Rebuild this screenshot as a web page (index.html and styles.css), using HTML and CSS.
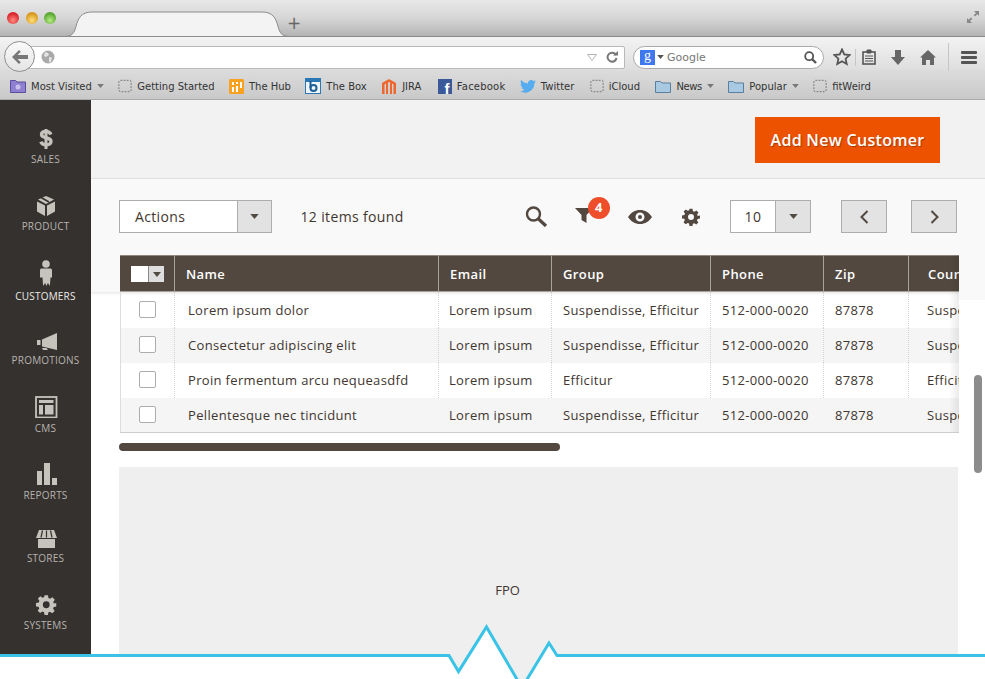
FILE: index.html
```html
<!DOCTYPE html>
<html lang="en">
<head>
    <meta charset="UTF-8">
    <title>Customers</title>
    <link rel="stylesheet" href="styles.css">
</head>
<body>
    <svg class="defs" width="0" height="0">
        <symbol id="gear" viewBox="0 0 24 24">
            <path d="M10 1h4l.6 3.200 1.900.8 2.700-1.800 2.800 2.800-1.800 2.700.8 1.900L24 10v4l-3.200.6-.8 1.900 1.800 2.700-2.800 2.800-2.700-1.800-1.900.8L14 24h-4l-.6-3.200-1.900-.8-2.700 1.800-2.800-2.800 1.800-2.700-.8-1.900L0 14v-4l3.200-.6.8-1.900-1.800-2.700 2.800-2.800 2.700 1.800 1.900-.8zM12 8a4 4 0 1 0 0 8 4 4 0 0 0 0-8z" fill-rule="evenodd"/>
        </symbol>
        <symbol id="dashed" viewBox="0 0 16 16">
            <rect x="1" y="1.500" width="14" height="13" rx="2" fill="none" stroke="#666" stroke-dasharray="2 1.500"/>
        </symbol>
        <symbol id="folder" viewBox="0 0 16 16">
            <path d="M.5 3.500h5l1.500 1.500h8.500v9.500H.5z" fill="#a9c8e2" stroke="#5a7f9e"/>
        </symbol>
        <symbol id="caret" viewBox="0 0 10 6">
            <path d="M0 0h10L5 6z"/>
        </symbol>
    </svg>

    <!-- browser -->
    <div class="tabstrip">
        <div class="lights">
            <span class="light light-red"></span>
            <span class="light light-yellow"></span>
            <span class="light light-green"></span>
        </div>
        <svg class="tab" width="226" height="28" viewBox="0 0 226 28">
            <path d="M0 27.500c8 0 10-3 12-10 2-8 5-14.500 16-14.500h170c11 0 14 6.500 16 14.500 2 7 4 10 12 10z" fill="#f3f3f3" stroke="#8c8c8c"/>
        </svg>
        <span class="tab-plus">+</span>
        <svg class="expand" width="14" height="14" viewBox="0 0 14 14">
            <path d="M8 1h5v5l-1.700-1.700-2.300 2.300-1.300-1.300 2.300-2.300zM6 13H1V8l1.700 1.700L5 7.400l1.300 1.300L4 11z" fill="#888"/>
        </svg>
    </div>
    <div class="navbar">
        <div class="back">
            <svg width="16" height="14" viewBox="0 0 16 14">
                <path d="M7 0l1.800 1.800L5.500 5H16v4H5.500l3.300 3.200L7 14 0 7z" fill="#777"/>
            </svg>
        </div>
        <div class="urlbar">
            <svg width="14" height="14" viewBox="0 0 14 14">
                <circle cx="7" cy="7" r="6.500" fill="#a9a9a9"/>
                <path d="M4 2l3 1 1 2-3 2-2-1zM8 7l3 .5-1 4-2 1z" fill="#e4e4e4"/>
            </svg>
            <svg class="url-drop" width="10" height="7" viewBox="0 0 10 7">
                <path d="M.5.500h9L5 6.500z" fill="none" stroke="#b5b5b5"/>
            </svg>
            <svg class="url-reload" width="12" height="12" viewBox="0 0 12 12">
                <path d="M10 4a4.500 4.500 0 1 0 .5 3" fill="none" stroke="#777" stroke-width="2"/>
                <path d="M7 4.500h5V0z" fill="#777"/>
            </svg>
        </div>
        <div class="searchbar">
            <span class="g-logo">g</span>
            <svg class="small-caret" width="7" height="4"><use href="#caret"/></svg>
            <span class="search-hint">Google</span>
            <svg width="13" height="13" viewBox="0 0 13 13">
                <circle cx="5.200" cy="5.200" r="4" fill="none" stroke="#555" stroke-width="1.800"/>
                <path d="M8 8l4 4" stroke="#555" stroke-width="2.400"/>
            </svg>
        </div>
        <svg class="tool tool-star" width="18" height="18" viewBox="0 0 18 18">
            <path d="M9 1.500l2.300 5 5.200.6-3.900 3.600 1.100 5.300L9 13.300 4.300 16l1.100-5.300L1.500 7.100l5.200-.6z" fill="none" stroke="#555" stroke-width="1.800"/>
        </svg>
        <span class="tool-sep"></span>
        <svg class="tool tool-clip" width="14" height="16" viewBox="0 0 14 16">
            <rect x="1" y="3" width="12" height="12" fill="none" stroke="#555" stroke-width="1.600"/>
            <path d="M5 1h4v3H5zM3 7h8M3 9.500h8M3 12h8" fill="#555" stroke="#555"/>
        </svg>
        <svg class="tool tool-down" width="14" height="15" viewBox="0 0 14 15">
            <path d="M4 0h6v7h4l-7 8-7-8h4z" fill="#666"/>
        </svg>
        <svg class="tool tool-home" width="16" height="15" viewBox="0 0 16 15">
            <path d="M8 0l8 7.500h-2V15h-4v-5H6v5H2V7.500H0z" fill="#666"/>
        </svg>
        <span class="tool-sep tool-sep-long"></span>
        <div class="menu-btn"><span></span><span></span><span></span></div>
    </div>
    <div class="bookmarks">
        <div class="bm">
            <svg width="16" height="14" viewBox="0 0 16 14">
                <path d="M.5 1.500h5l1.500 1.500h8.500v10.500H.5z" fill="#8f7fd0" stroke="#5a4d9c"/>
                <circle cx="8" cy="8" r="2.500" fill="#c9c0ee"/>
            </svg>
            Most Visited
            <svg class="bm-caret" width="7" height="4"><use href="#caret"/></svg>
        </div>
        <div class="bm"><svg width="14" height="14"><use href="#dashed"/></svg>Getting Started</div>
        <div class="bm">
            <svg width="15" height="15" viewBox="0 0 15 15">
                <rect width="15" height="15" rx="1.500" fill="#f7a11f"/>
                <path d="M3 3h2v3H3zM7 3h2v2H7zM11 3h2v6h-2zM3 8h2v5H3zM7 7h2v6H7z" fill="#fff"/>
            </svg>
            The Hub
        </div>
        <div class="bm">
            <svg width="16" height="16" viewBox="0 0 16 16">
                <rect x=".5" y=".5" width="15" height="15" fill="#eef5fb" stroke="#2b78b5"/>
                <rect x="1" y="1" width="14" height="3" fill="#2b78b5"/>
                <circle cx="8.500" cy="10" r="3" fill="none" stroke="#1d5f96" stroke-width="2"/>
                <path d="M5.500 3v7" stroke="#1d5f96" stroke-width="2"/>
            </svg>
            The Box
        </div>
        <div class="bm">
            <svg width="16" height="17" viewBox="0 0 16 17">
                <path d="M1 16V5l7-4 7 4v11h-2.500V6.500L11 5.500V16H9V4.500L8 4l-1 .5V16H5V5.500l-1.500 1V16z" fill="#ee672f"/>
            </svg>
            JIRA
        </div>
        <div class="bm bm-facebook">
            <svg width="14" height="15" viewBox="0 0 14 15">
                <rect width="14" height="15" fill="#3b5998"/>
                <text x="6.500" y="15" class="fb-letter">f</text>
            </svg>
            Facebook
        </div>
        <div class="bm">
            <svg width="16" height="13" viewBox="0 0 16 13">
                <path d="M16 1.500c-.6.300-1.200.400-1.900.5.700-.4 1.200-1 1.400-1.800-.6.400-1.300.6-2 .8A3.300 3.300 0 0 0 7.900 3.500C5.200 3.400 2.800 2.100 1.100.1.200 1.600.700 3.500 2.100 4.500c-.5 0-1-.2-1.500-.4 0 1.600 1.100 3 2.600 3.300-.5.100-1 .2-1.500.1.400 1.300 1.600 2.200 3.100 2.300A6.600 6.600 0 0 1 0 11.100 9.300 9.300 0 0 0 14.400 3.300c.6-.5 1.200-1.100 1.600-1.800z" fill="#55acee"/>
            </svg>
            Twitter
        </div>
        <div class="bm bm-nudge"><svg width="14" height="14"><use href="#dashed"/></svg>iCloud</div>
        <div class="bm bm-nudge bm-news"><svg width="16" height="16"><use href="#folder"/></svg>News<svg class="bm-caret" width="7" height="4"><use href="#caret"/></svg></div>
        <div class="bm"><svg width="16" height="16"><use href="#folder"/></svg>Popular<svg class="bm-caret" width="7" height="4"><use href="#caret"/></svg></div>
        <div class="bm"><svg width="14" height="14"><use href="#dashed"/></svg>fitWeird</div>
    </div>

    <!-- admin page -->
    <div class="app">
        <nav class="sidebar">
            <a class="nav-item">
                <svg width="40" height="22" viewBox="0 0 40 22">
                    <path d="M25 7.500c-1-2-3-3-5-3s-4.500.8-4.500 3c0 4.500 9.500 2 9.500 7 0 2.200-2.500 3.300-5 3.300s-4.300-1-5.300-3" fill="none" stroke-width="3.400"/>
                    <rect x="18.500" y="2" width="3" height="20"/>
                </svg>
                Sales
            </a>
            <a class="nav-item">
                <svg width="40" height="26" viewBox="0 0 40 26">
                    <path d="M11 11.500l8 4V26l-8-4.500zM29 11.500l-8 4V26l8-4.500zM12 9.500L20 6l8 3.500-8 4.500z"/>
                    <path d="M15 7.500l8 4.500" stroke="#35312e" stroke-width="1.500"/>
                </svg>
                Product
            </a>
            <a class="nav-item nav-item-active">
                <svg width="40" height="29" viewBox="0 0 40 29">
                    <circle cx="20" cy="7" r="3.800"/>
                    <path d="M15.500 11.500h9c1 0 1.500.8 1.500 2v7h-1.500l-.6 8.500-2-3-1.400 3-1.400-3-2 3-.6-8.500H14v-7c0-1.200.5-2 1.500-2z"/>
                </svg>
                Customers
            </a>
            <a class="nav-item">
                <svg width="40" height="23" viewBox="0 0 40 23">
                    <path d="M16 12.500L31 6v17l-15-3.500zM11 13h3.500v5H11zM16 21h4.500l1.500 2h-5z"/>
                </svg>
                Promotions
            </a>
            <a class="nav-item">
                <svg width="40" height="27" viewBox="0 0 40 27">
                    <rect x="10" y="6" width="20.500" height="20.500" fill="none" stroke-width="1.800"/>
                    <path d="M13 9h14.500v3H13zM13 14h4v9.500h-4zM19 14h8.500v9.500H19z"/>
                </svg>
                CMS
            </a>
            <a class="nav-item">
                <svg width="40" height="26" viewBox="0 0 40 26">
                    <path d="M11 12h5v14h-5zM18 4h6v22h-6zM26 19h5v7h-5z"/>
                </svg>
                Reports
            </a>
            <a class="nav-item">
                <svg width="40" height="22" viewBox="0 0 40 22">
                    <path d="M13 4h15l3 8H10zM12 13h17v9H12z"/>
                    <path d="M16.500 4.500l-1.500 7M20.500 4.500v7M24.500 4.500l1.500 7" stroke="#35312e" stroke-width="1.200"/>
                </svg>
                Stores
            </a>
            <a class="nav-item">
                <svg width="40" height="26" viewBox="0 0 40 26">
                    <use href="#gear" x="10" y="5.500" width="20.500" height="20.500"/>
                </svg>
                Systems
            </a>
        </nav>

        <main class="content">
            <div class="page-head">
                <button class="add-btn">Add New Customer</button>
            </div>
            <div class="toolbar">
                <div class="select select-actions">
                    <span class="select-value">Actions</span>
                    <span class="select-arrow"><svg width="9" height="5"><use href="#caret"/></svg></span>
                </div>
                <span class="found">12 items found</span>
                <svg class="tb-icon tb-search" width="23" height="21" viewBox="0 0 23 21">
                    <circle cx="8.500" cy="8" r="6.500" fill="none" stroke-width="2.400" class="tb-stroke"/>
                    <path d="M13 12.500l8 7.500" stroke-width="3.200" class="tb-stroke"/>
                </svg>
                <div class="tb-filter">
                    <svg width="18" height="15" viewBox="0 0 18 15">
                        <path d="M0 0h18l-6.500 7v8l-5-3V7z" fill="#524840"/>
                    </svg>
                    <span class="badge">4</span>
                </div>
                <svg class="tb-icon tb-eye" width="24" height="14" viewBox="0 0 24 14">
                    <path d="M0 7c3-4.500 7-7 12-7s9 2.500 12 7c-3 4.500-7 7-12 7S3 11.500 0 7zm12-4.500a4.500 4.500 0 1 0 0 9 4.500 4.500 0 0 0 0-9zM12 5a2 2 0 1 1 0 4 2 2 0 0 1 0-4z" fill-rule="evenodd" fill="#524840"/>
                </svg>
                <svg class="tb-icon tb-gear" width="18" height="18"><use href="#gear" fill="#524840"/></svg>
                <div class="select select-pager">
                    <span class="select-value">10</span>
                    <span class="select-arrow"><svg width="9" height="5"><use href="#caret"/></svg></span>
                </div>
                <button class="page-btn page-prev">
                    <svg width="9" height="14" viewBox="0 0 9 14"><path d="M7.500 1l-6 6 6 6" class="tb-stroke" fill="none" stroke-width="2"/></svg>
                </button>
                <button class="page-btn page-next">
                    <svg width="9" height="14" viewBox="0 0 9 14"><path d="M1.500 1l6 6-6 6" class="tb-stroke" fill="none" stroke-width="2"/></svg>
                </button>
            </div>
            <span class="band-end"></span>

            <div class="grid-wrap">
                <table class="grid">
                    <thead>
                        <tr>
                            <th class="col-check">
                                <span class="check-all"><i></i><b><svg width="8" height="5"><use href="#caret"/></svg></b></span>
                            </th>
                            <th class="col-name">Name</th>
                            <th class="col-email">Email</th>
                            <th class="col-group">Group</th>
                            <th class="col-phone">Phone</th>
                            <th class="col-zip">Zip</th>
                            <th class="col-country">Country</th>
                        </tr>
                    </thead>
                    <tbody>
                        <tr>
                            <td><span class="check"></span></td>
                            <td>Lorem ipsum dolor</td>
                            <td>Lorem ipsum</td>
                            <td>Suspendisse, Efficitur</td>
                            <td>512-000-0020</td>
                            <td>87878</td>
                            <td>Suspendisse</td>
                        </tr>
                        <tr>
                            <td><span class="check"></span></td>
                            <td>Consectetur adipiscing elit</td>
                            <td>Lorem ipsum</td>
                            <td>Suspendisse, Efficitur</td>
                            <td>512-000-0020</td>
                            <td>87878</td>
                            <td>Suspendisse</td>
                        </tr>
                        <tr>
                            <td><span class="check"></span></td>
                            <td>Proin fermentum arcu nequeasdfd</td>
                            <td>Lorem ipsum</td>
                            <td>Efficitur</td>
                            <td>512-000-0020</td>
                            <td>87878</td>
                            <td>Efficitur</td>
                        </tr>
                        <tr>
                            <td><span class="check"></span></td>
                            <td>Pellentesque nec tincidunt</td>
                            <td>Lorem ipsum</td>
                            <td>Suspendisse, Efficitur</td>
                            <td>512-000-0020</td>
                            <td>87878</td>
                            <td>Suspendisse</td>
                        </tr>
                    </tbody>
                </table>
                <span class="grid-fade"></span>
            </div>
            <div class="h-scroll"></div>
            <div class="fpo">FPO</div>
            <span class="v-scroll"></span>
        </main>
    </div>

    <!-- torn edge over the bottom of the page -->
    <svg class="torn" width="985" height="60" viewBox="0 0 985 60">
        <path d="M0 36.500H449L458.500 52.500 486.500 8 518 62H526L549 24 557 36.500H985V60H0z" fill="#fff"/>
        <path d="M0 36.500H449L458.500 52.500 486.500 8 518 62M526 62L549 24 557 36.500H985" fill="none" stroke="#39c3e6" stroke-width="3"/>
    </svg>
</body>
</html>
```

FILE: styles.css
```css
html, body {
    margin: 0;
    padding: 0;
    height: 679px;
    overflow: hidden;
    background-color: #fff;
}

body {
    position: relative;
    font-family: "Open Sans", Arial, sans-serif;
    color: #41362f;
}

.defs {
    position: absolute;
}

/* browser */
.tabstrip {
    display: flex;
    height: 37px;
    box-sizing: border-box;
    align-items: flex-end;
    padding-left: 64px;
    position: relative;
    background: linear-gradient(#e8e8e8, #d6d6d6 50%, #b4b4b4);
    border-bottom: 1px solid #8a8a8a;
}

.tab {
    display: block;
    margin-bottom: -1px;
}

.lights {
    position: absolute;
    left: 7px;
    top: 12px;
    display: flex;
    gap: 6.5px;
}

.light {
    width: 12px;
    height: 12px;
    border-radius: 50%;
}

.light-red {
    background: radial-gradient(circle at 50% 70%, #ff8a80, #d8232a 70%);
}

.light-yellow {
    background: radial-gradient(circle at 50% 70%, #ffe07a, #d8951c 70%);
}

.light-green {
    background: radial-gradient(circle at 50% 70%, #b5ec84, #58a52f 70%);
}

.tab-plus {
    font-family: "DejaVu Sans", sans-serif;
    font-size: 17px;
    line-height: 20px;
    color: #666;
    margin-left: -3px;
    margin-bottom: 3px;
}

.expand {
    position: absolute;
    right: 5px;
    top: 10px;
}

.navbar {
    display: flex;
    align-items: center;
    height: 33px;
    padding-left: 4px;
    background: linear-gradient(#f3f3f3, #dedede);
}

.back {
    width: 29px;
    height: 29px;
    margin-top: 6px;
    border: 1px solid #8e8e8e;
    border-radius: 50%;
    background: linear-gradient(#fafafa, #e4e4e4);
    display: flex;
    align-items: center;
    justify-content: center;
    position: relative;
    z-index: 1;
}

.urlbar {
    width: 605px;
    height: 23px;
    box-sizing: border-box;
    margin-left: -15px;
    margin-top: 7px;
    padding: 0 6px 0 20px;
    background-color: #fff;
    border: 1px solid #b9b9b9;
    border-radius: 2px;
    display: flex;
    align-items: center;
}

.url-drop {
    margin-left: auto;
}

.url-reload {
    margin-left: 9px;
}

.searchbar {
    width: 191px;
    height: 23px;
    box-sizing: border-box;
    margin-left: 8px;
    margin-top: 7px;
    padding: 0 6px 0 6px;
    background-color: #fff;
    border: 1px solid #a9a9a9;
    border-radius: 12px;
    display: flex;
    align-items: center;
}

.g-logo {
    width: 15px;
    height: 15px;
    background-color: #3f78ee;
    color: #fff;
    font-family: "Liberation Serif", serif;
    font-size: 14px;
    line-height: 12px;
    text-align: center;
}

.small-caret {
    margin-left: 2px;
    fill: #555;
}

.search-hint {
    margin-left: 3px;
    margin-right: auto;
    font-family: "DejaVu Sans", sans-serif;
    font-size: 11px;
    color: #777;
}

.tool {
    flex: none;
    margin-top: 7px;
}

.tool-star {
    margin-left: 9px;
}

.tool-sep {
    width: 1px;
    height: 17px;
    margin-top: 7px;
    margin-left: 4px;
    background-color: #c6c6c6;
}

.tool-clip {
    margin-left: 6px;
}

.tool-down {
    margin-left: 15px;
}

.tool-home {
    margin-left: 15px;
}

.tool-sep-long {
    height: 28px;
    margin-left: 12px;
}

.menu-btn {
    margin-left: 12px;
    margin-top: 7px;
    display: flex;
    flex-direction: column;
    gap: 2px;
}

.menu-btn span {
    width: 16px;
    height: 3px;
    border-radius: 1px;
    background-color: #555;
}

.bookmarks {
    display: flex;
    align-items: center;
    height: 30px;
    box-sizing: border-box;
    padding-left: 10px;
    padding-top: 3px;
    gap: 14.4px;
    background: linear-gradient(#dcdcdc, #c9c9c9);
    border-bottom: 1px solid #aaa;
    font-family: "DejaVu Sans", sans-serif;
    font-size: 10px;
    color: #333;
}

.bm {
    display: flex;
    align-items: center;
    gap: 5px;
    white-space: nowrap;
}

.bm-facebook {
    margin-left: 2px;
    letter-spacing: 0.2px;
}

.bm-nudge {
    margin-left: 1px;
}

.bm-news {
    letter-spacing: -0.4px;
}

.bm-caret {
    fill: #777;
}

.fb-letter {
    font-family: "Liberation Sans", sans-serif;
    font-size: 15px;
    font-weight: bold;
    fill: #fff;
}

/* admin page */
.app {
    display: flex;
    height: 579px;
}

.sidebar {
    flex: none;
    width: 91px;
    box-sizing: border-box;
    padding-top: 27px;
    display: flex;
    flex-direction: column;
    align-items: center;
    gap: 25px;
    background-color: #35312e;
}

.nav-item {
    display: flex;
    flex-direction: column;
    align-items: center;
    font-size: 10px;
    line-height: 12px;
    letter-spacing: 0.2px;
    text-transform: uppercase;
    color: #b7b3ae;
}

.nav-item svg {
    display: block;
    margin-bottom: 4px;
    fill: #c6c2bc;
    stroke: #c6c2bc;
    stroke-width: 0;
}

.nav-item-active {
    color: #ecebe8;
}

.content {
    flex: 1;
    min-width: 0;
    position: relative;
}

.page-head {
    height: 79px;
    box-sizing: border-box;
    padding: 17px 45px 0 0;
    display: flex;
    justify-content: flex-end;
    align-items: flex-start;
    background-color: #f2f2f2;
    border-bottom: 1px solid #e4e4e4;
}

.add-btn {
    width: 185px;
    height: 46px;
    border: none;
    padding: 0;
    background-color: #ec5200;
    color: #fff;
    font-family: "Open Sans", Arial, sans-serif;
    font-size: 16px;
    font-weight: 600;
    letter-spacing: 0.3px;
    text-shadow: 1px 1px 1px rgba(0, 0, 0, 0.3);
}

.toolbar {
    height: 113px;
    box-sizing: border-box;
    padding: 21px 28px 0;
    display: flex;
    align-items: flex-start;
    background-color: #f9f9f9;
    box-shadow: 0 1px 3px rgba(0, 0, 0, 0.12);
    font-size: 14px;
    letter-spacing: 0.35px;
}

.band-end {
    position: absolute;
    left: 868px;
    top: 190px;
    width: 26px;
    height: 10px;
    background-color: #f9f9f9;
}

.select {
    height: 33px;
    box-sizing: border-box;
    display: flex;
    background-color: #fff;
    border: 1px solid #adadad;
    line-height: 31px;
}

.select-value {
    flex: 1;
}

.select-arrow {
    display: flex;
    align-items: center;
    justify-content: center;
    width: 33px;
    background-color: #e2e2e2;
    border-left: 1px solid #adadad;
    fill: #514a43;
}

.select-actions {
    width: 153px;
}

.select-actions .select-value {
    padding-left: 15px;
}

.select-pager {
    width: 82px;
    margin-left: 30px;
}

.select-pager .select-value {
    padding-left: 14px;
}

.select-pager .select-arrow {
    width: 34px;
}

.found {
    margin-left: 29px;
    line-height: 33px;
    white-space: nowrap;
}

.tb-stroke {
    stroke: #524840;
}

.tb-icon {
    flex: none;
}

.tb-search {
    margin-left: 121px;
    margin-top: 6px;
}

.tb-filter {
    position: relative;
    margin-left: 27px;
    margin-top: 8px;
    width: 19px;
    height: 15px;
}

.tb-filter svg {
    display: block;
}

.badge {
    position: absolute;
    left: 13px;
    top: -11px;
    width: 22px;
    height: 22px;
    border-radius: 50%;
    background-color: #ef4e2a;
    color: #fff;
    font-size: 13px;
    font-weight: 700;
    line-height: 21px;
    letter-spacing: 0;
    text-align: center;
}

.tb-eye {
    margin-left: 34px;
    margin-top: 10px;
}

.tb-gear {
    margin-left: 30px;
    margin-top: 8px;
}

.page-btn {
    width: 46px;
    height: 33px;
    padding: 0;
    background-color: #e3e3e3;
    border: 1px solid #adadad;
    display: flex;
    align-items: center;
    justify-content: center;
}

.page-prev {
    margin-left: 30px;
}

.page-next {
    margin-left: 24px;
}

.grid-wrap {
    position: relative;
    width: 839px;
    margin: -37px 0 0 29px;
    overflow: hidden;
    border-bottom: 1px solid #ccc;
}

.grid {
    width: 960px;
    table-layout: fixed;
    border-collapse: separate;
    border-spacing: 0;
    font-size: 13px;
    letter-spacing: 0.33px;
}

.grid th {
    height: 37px;
    box-sizing: border-box;
    padding: 0 0 0 11px;
    text-align: left;
    font-weight: 600;
    letter-spacing: 0.4px;
    color: #fff;
    background-color: #524840;
    border-left: 1px solid #a9a39d;
    border-top: 1px solid #8d8580;
    border-bottom: 1px solid #a9a39d;
}

.grid th:first-child {
    border-left: none;
}

.col-check {
    width: 54px;
}

.col-name {
    width: 264px;
}

.col-email {
    width: 113px;
}

.col-group {
    width: 159px;
}

.col-phone {
    width: 113px;
}

.col-zip {
    width: 85px;
}

.grid th.col-country {
    padding-left: 19px;
}

.grid td {
    height: 35px;
    box-sizing: border-box;
    padding: 0 0 2px 11px;
    white-space: nowrap;
    overflow: hidden;
    border-left: 1px dotted #d4d4d4;
}

.grid tbody tr:first-child td {
    height: 36px;
    padding-bottom: 1px;
}

.grid tbody tr:nth-child(even) td {
    background-color: #f5f5f5;
}

.grid tbody tr:last-child td {
    height: 34px;
    padding-bottom: 1px;
    border-left-color: transparent;
}

.grid td:first-child {
    border-left: none;
    padding-left: 19px;
    box-shadow: inset 1px 0 0 #ddd;
}

.grid td:nth-child(2) {
    padding-left: 13px;
}

.grid td:nth-child(3) {
    padding-left: 10px;
}

.grid td:last-child {
    padding-left: 18px;
}

.check {
    display: block;
    width: 17px;
    height: 17px;
    box-sizing: border-box;
    background-color: #fff;
    border: 1px solid #adadad;
    border-radius: 2px;
}

.check-all {
    display: flex;
    width: 33px;
    height: 16px;
    margin-top: 1px;
}

.check-all i {
    width: 17px;
    background-color: #fff;
}

.check-all b {
    flex: 1;
    background-color: #dedede;
    border-left: 1px solid #888;
    display: flex;
    align-items: center;
    justify-content: center;
    fill: #514a43;
}

.grid-fade {
    position: absolute;
    right: 0;
    top: 0;
    bottom: 0;
    width: 10px;
    background: linear-gradient(to right, rgba(0, 0, 0, 0), rgba(0, 0, 0, 0.08));
}

.h-scroll {
    width: 441px;
    height: 8px;
    margin: 10px 0 0 28px;
    border-radius: 4px;
    background-color: #524840;
}

.fpo {
    width: 839px;
    height: 240px;
    margin: 16px 0 0 28px;
    padding: 114px 62px 0 0;
    box-sizing: border-box;
    background-color: #efefef;
    font-size: 13px;
    line-height: 18px;
    text-align: center;
}

.v-scroll {
    position: absolute;
    left: 883px;
    top: 275px;
    width: 8px;
    height: 98px;
    border-radius: 4px;
    background-color: #8c8c8c;
}

.torn {
    position: absolute;
    left: 0;
    top: 619px;
}
```
